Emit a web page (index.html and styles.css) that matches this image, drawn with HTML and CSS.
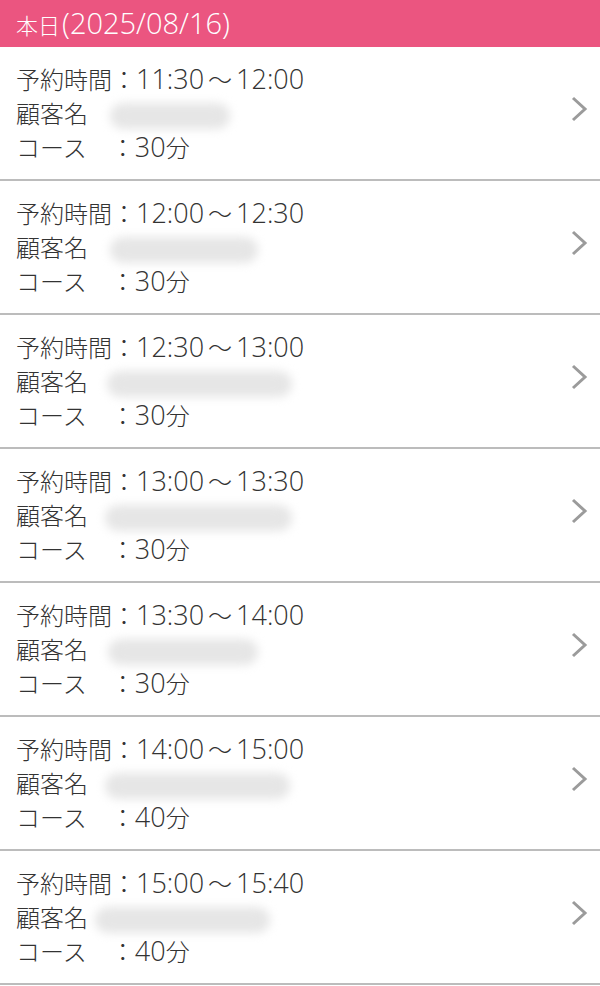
FILE: index.html
```html
<!DOCTYPE html>
<html lang="ja">
<head>
<meta charset="utf-8">
<link rel="stylesheet" href="styles.css">
</head>
<body>
<div class="header">本日<span class="num">(2025/08/16)</span></div>
<ul class="list">
  <li class="row">
    <div class="info">
      <div class="line">予約時間：<span class="num">11:30</span><span class="tilde">〜</span><span class="num">12:00</span></div>
      <div class="line">顧客名<span class="blur" style="margin-left:22px;width:120px"></span></div>
      <div class="line">コース　：<span class="num">30</span>分</div>
    </div>
    <svg class="chev" width="18" height="28" viewBox="0 0 18 28"><polyline points="3,3 15,14 3,25"/></svg>
  </li>
  <li class="row">
    <div class="info">
      <div class="line">予約時間：<span class="num">12:00</span><span class="tilde">〜</span><span class="num">12:30</span></div>
      <div class="line">顧客名<span class="blur" style="margin-left:22px;width:148px"></span></div>
      <div class="line">コース　：<span class="num">30</span>分</div>
    </div>
    <svg class="chev" width="18" height="28" viewBox="0 0 18 28"><polyline points="3,3 15,14 3,25"/></svg>
  </li>
  <li class="row">
    <div class="info">
      <div class="line">予約時間：<span class="num">12:30</span><span class="tilde">〜</span><span class="num">13:00</span></div>
      <div class="line">顧客名<span class="blur" style="margin-left:19px;width:185px"></span></div>
      <div class="line">コース　：<span class="num">30</span>分</div>
    </div>
    <svg class="chev" width="18" height="28" viewBox="0 0 18 28"><polyline points="3,3 15,14 3,25"/></svg>
  </li>
  <li class="row">
    <div class="info">
      <div class="line">予約時間：<span class="num">13:00</span><span class="tilde">〜</span><span class="num">13:30</span></div>
      <div class="line">顧客名<span class="blur" style="margin-left:17px;width:187px"></span></div>
      <div class="line">コース　：<span class="num">30</span>分</div>
    </div>
    <svg class="chev" width="18" height="28" viewBox="0 0 18 28"><polyline points="3,3 15,14 3,25"/></svg>
  </li>
  <li class="row">
    <div class="info">
      <div class="line">予約時間：<span class="num">13:30</span><span class="tilde">〜</span><span class="num">14:00</span></div>
      <div class="line">顧客名<span class="blur" style="margin-left:20px;width:150px"></span></div>
      <div class="line">コース　：<span class="num">30</span>分</div>
    </div>
    <svg class="chev" width="18" height="28" viewBox="0 0 18 28"><polyline points="3,3 15,14 3,25"/></svg>
  </li>
  <li class="row">
    <div class="info">
      <div class="line">予約時間：<span class="num">14:00</span><span class="tilde">〜</span><span class="num">15:00</span></div>
      <div class="line">顧客名<span class="blur" style="margin-left:17px;width:185px"></span></div>
      <div class="line">コース　：<span class="num">40</span>分</div>
    </div>
    <svg class="chev" width="18" height="28" viewBox="0 0 18 28"><polyline points="3,3 15,14 3,25"/></svg>
  </li>
  <li class="row">
    <div class="info">
      <div class="line">予約時間：<span class="num">15:00</span><span class="tilde">〜</span><span class="num">15:40</span></div>
      <div class="line">顧客名<span class="blur" style="margin-left:7px;width:175px"></span></div>
      <div class="line">コース　：<span class="num">40</span>分</div>
    </div>
    <svg class="chev" width="18" height="28" viewBox="0 0 18 28"><polyline points="3,3 15,14 3,25"/></svg>
  </li>
</ul>
</body>
</html>
```

FILE: styles.css
```css
html, body {
  margin: 0;
  padding: 0;
  background: #ffffff;
}
body {
  font-family: "Noto Sans CJK JP", "Noto Sans", sans-serif;
  font-weight: 300;
  color: #333333;
}
.header {
  height: 47px;
  line-height: 45px;
  background: #eb5580;
  color: #ffffff;
  font-size: 22px;
  padding-left: 16px;
  white-space: nowrap;
}
.header .num {
  font-size: 29px;
  margin-left: 2px;
}
.num {
  font-family: "Open Sans", "Liberation Sans", sans-serif;
  font-weight: 300;
  font-size: 27px;
}
.tilde {
  margin: 0 4px;
}
.list {
  list-style: none;
  margin: 0;
  padding: 0;
}
.row {
  display: flex;
  align-items: center;
  justify-content: space-between;
  padding: 15px 12px 15px 16px;
  border-bottom: 2px solid #bcbcbc;
}
.info {
  display: flex;
  flex-direction: column;
}
.line {
  height: 34px;
  line-height: 34px;
  font-size: 24px;
  white-space: nowrap;
}
.blur {
  display: inline-block;
  vertical-align: middle;
  height: 26px;
  border-radius: 13px;
  background: #e6e6e6;
  filter: blur(5px);
}
.chev {
  margin-top: -8px;
  flex: none;
}
.chev polyline {
  fill: none;
  stroke: #9b9b9b;
  stroke-width: 3;
}
```
